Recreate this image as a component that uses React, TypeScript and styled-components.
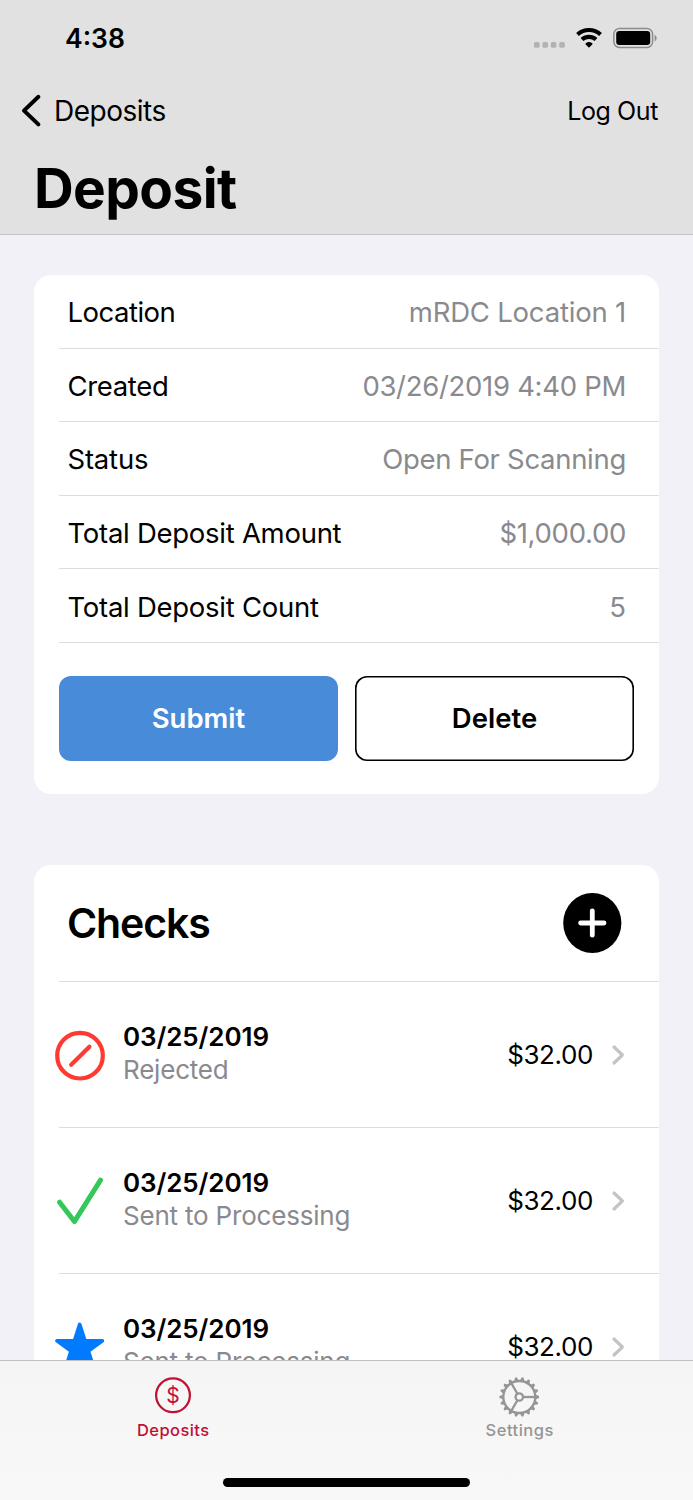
import React from 'react';
import styled, { createGlobalStyle } from 'styled-components';

const GlobalStyle = createGlobalStyle`
  * { box-sizing: border-box; }
  body { margin: 0; background: #f2f1f7; }
  button { font: inherit; color: inherit; background: none; border: 0; padding: 0; margin: 0; }
  svg { display: block; flex: none; overflow: visible; }
`;

const Screen = styled.div`
  width: 693px;
  height: 1500px;
  display: flex;
  flex-direction: column;
  overflow: hidden;
  background: #f2f1f7;
  color: #000;
  font-family: Inter, 'Liberation Sans', sans-serif;
  white-space: nowrap;
`;

const Label = styled.span<{ $size: number; $spacing?: number; $weight?: number; $color?: string }>`
  font-size: ${p => p.$size}px;
  font-weight: ${p => p.$weight ?? 400};
  letter-spacing: ${p => p.$spacing ?? 0}px;
  color: ${p => p.$color ?? 'inherit'};
  line-height: 1.2;
`;

const Header = styled.header`
  flex: none;
  height: 235px;
  background: #e1e1e1;
  border-bottom: 1px solid #c3c3c5;
`;

const StatusBar = styled.div`
  height: 76px;
  display: flex;
  align-items: center;
  justify-content: space-between;
  padding: 0 36px 0 65px;
`;

const Clock = styled(Label)`
  padding-top: 2px;
`;

const StatusIcons = styled.div`
  display: flex;
  align-items: center;
  gap: 11px;
`;

const NavBar = styled.nav`
  height: 70px;
  display: flex;
  align-items: center;
  justify-content: space-between;
  padding: 0 35px 0 21px;
`;

const BackButton = styled.button`
  display: flex;
  align-items: center;
  gap: 13px;
`;

const BackLabel = styled(Label)`
  padding-top: 2px;
`;

const Title = styled.h1`
  margin: 8px 0 0 34px;
  font-size: 55px;
  line-height: 68px;
  font-weight: 700;
  letter-spacing: -0.6px;
`;

const Content = styled.main`
  flex: 1;
  min-height: 0;
  overflow: hidden;
  padding: 40px 34px 0;
  display: flex;
  flex-direction: column;
  gap: 71px;
`;

const Card = styled.section`
  flex: none;
  background: #fff;
  border-radius: 17px;
  padding-left: 25px;
`;

const DetailRow = styled.div`
  height: 73.6px;
  display: flex;
  align-items: center;
  justify-content: space-between;
  padding: 3px 33px 0 8.5px;
  border-bottom: 1px solid #dcdcde;
`;

const Actions = styled.div`
  display: grid;
  grid-template-columns: 1fr 1fr;
  gap: 17px;
  padding: 33px 25px 33px 0;
`;

const ActionButton = styled.button<{ $primary?: boolean }>`
  height: 85px;
  padding-top: 1px;
  border-radius: 12px;
  background: ${p => (p.$primary ? '#488bd8' : '#fff')};
  color: ${p => (p.$primary ? '#fff' : '#000')};
  box-shadow: ${p => (p.$primary ? 'none' : 'inset 0 0 0 1.6px #000')};
`;

const ChecksHead = styled.div`
  height: 117px;
  display: flex;
  align-items: center;
  justify-content: space-between;
  padding: 0 37px 0 8px;
  border-bottom: 1px solid #dcdcde;
`;

const ChecksTitle = styled(Label)`
  padding-top: 2px;
`;

const CheckRow = styled.div`
  height: 146px;
  display: flex;
  align-items: center;
  padding-right: 34px;
  border-bottom: 1px solid #dcdcde;
`;

const CheckIcon = styled.div`
  width: 50px;
  margin: 3px 18px 0 -4px;
`;

const CheckText = styled.div`
  flex: 1;
  display: flex;
  flex-direction: column;
  gap: 2px;
  padding-bottom: 2px;
`;

const Amount = styled.div`
  display: flex;
  align-items: center;
  gap: 19px;
  padding-top: 1px;
`;

const TabBar = styled.footer`
  flex: none;
  height: 140px;
  background: linear-gradient(#f5f5f5, #f8f8f8);
  border-top: 1px solid #c0c0c2;
  display: flex;
  flex-direction: column;
  align-items: center;
`;

const Tabs = styled.div`
  width: 100%;
  height: 117px;
  display: grid;
  grid-template-columns: 1fr 1fr;
`;

const Tab = styled.button<{ $active?: boolean }>`
  display: flex;
  flex-direction: column;
  align-items: center;
  justify-content: flex-start;
  padding-top: 14px;
  gap: 8px;
  color: ${p => (p.$active ? '#c20f33' : '#959595')};
`;

const HomeIndicator = styled.div`
  width: 247px;
  height: 9px;
  border-radius: 5px;
  background: #000;
`;

const SignalIcon = () => (
  <svg width="31" height="20" viewBox="0 0 31 20" fill="#b2b2b2">
    {[0, 8.4, 16.8, 25.2].map(x => (
      <rect key={x} x={x} y="14" width="5.6" height="5.8" rx="1.6" />
    ))}
  </svg>
);

const WifiIcon = () => (
  <svg width="26" height="20" viewBox="0 0 26 20" fill="none" stroke="#000" strokeWidth="4.1">
    <path d="M1.5 6.5A16.9 16.9 0 0 1 24.5 6.5" />
    <path d="M6 11.6A10.3 10.3 0 0 1 20 11.6" />
    <path d="M13 18.8L10.2 15.9A4.6 4.6 0 0 1 15.8 15.9Z" fill="#000" strokeWidth="1.4" strokeLinejoin="round" />
  </svg>
);

const BatteryIcon = () => (
  <svg width="44" height="20" viewBox="0 0 44 20">
    <rect x="0.8" y="0.6" width="38.8" height="18.8" rx="5.6" fill="none" stroke="#8c8c8c" strokeWidth="1.5" />
    <rect x="3.2" y="3" width="34" height="14" rx="3.2" />
    <path d="M41.6 7v6.4c2.7-1.2 2.7-5.2 0-6.4Z" fill="#8c8c8c" />
  </svg>
);

const BackIcon = () => (
  <svg width="20" height="32" viewBox="0 0 20 32" fill="none" stroke="#000" strokeWidth="4" strokeLinecap="round" strokeLinejoin="round">
    <path d="M17.4 1.8L3 15.6L17.4 29.4" />
  </svg>
);

const PlusIcon = () => (
  <svg width="59" height="60" viewBox="0 0 59 60">
    <ellipse cx="29.3" cy="30" rx="29.1" ry="30" />
    <path d="M29.3 17.8v24.4M17.6 30h23.4" stroke="#fff" strokeWidth="4.8" strokeLinecap="round" />
  </svg>
);

const RejectedIcon = () => (
  <svg width="50" height="50" viewBox="0 0 50 50" fill="none" stroke="#ff3a30" strokeWidth="4.2" strokeLinecap="round">
    <circle cx="25" cy="24.7" r="22.8" />
    <path d="M16.2 33.7L34.4 15.7" />
  </svg>
);

const SentIcon = () => (
  <svg width="50" height="50" viewBox="0 0 50 50" fill="none" stroke="#34c759" strokeWidth="5" strokeLinecap="round" strokeLinejoin="round">
    <path d="M4.6 25.2L19.4 44.6L45.5 3.2" />
  </svg>
);

const StarIcon = () => (
  <svg width="50" height="50" viewBox="0 0 50 50" fill="#007aff" stroke="#007aff" strokeWidth="3.6" strokeLinejoin="round">
    <path d="M24.7 1.4L30 17.9H47.4L33.4 28.1L38.8 45L24.7 34.6L10.6 45L16 28.1L2 17.9H19.4Z" />
  </svg>
);

const Chevron = () => (
  <svg width="13" height="20" viewBox="0 0 13 20" fill="none" stroke="#c4c4c7" strokeWidth="3.2" strokeLinecap="round" strokeLinejoin="round">
    <path d="M2 2L10.4 10L2 18" />
  </svg>
);

const DollarIcon = () => (
  <svg width="38" height="38" viewBox="0 0 38 38">
    <circle cx="19" cy="20.3" r="16.9" fill="none" stroke="currentColor" strokeWidth="2.2" />
    <text x="19" y="28" textAnchor="middle" fontSize="21" fill="currentColor">$</text>
  </svg>
);

const TEETH = Array.from({ length: 18 }, (_, i) => i * 20);

const GearIcon = () => (
  <svg width="40" height="38" viewBox="0 0 40 38" fill="none" stroke="currentColor" strokeWidth="2.3">
    <g transform="translate(19.3 22)">
      <circle r="16" />
      <circle r="3.7" />
      {TEETH.map(a => (
        <path key={a} d="M16.6 -2.2L19.8 -0.9V0.9L16.6 2.2Z" fill="currentColor" stroke="none" transform={`rotate(${a})`} />
      ))}
      {[0, 120, 240].map(a => (
        <path key={a} d="M3.8 0H16" transform={`rotate(${a})`} />
      ))}
    </g>
  </svg>
);

const details = [
  { label: 'Location', value: 'mRDC Location 1', labelSpacing: -0.5, valueSpacing: -0.2 },
  { label: 'Created', value: '03/26/2019 4:40 PM', labelSpacing: -0.35, valueSpacing: -0.3 },
  { label: 'Status', value: 'Open For Scanning', labelSpacing: -0.2, valueSpacing: -0.3 },
  { label: 'Total Deposit Amount', value: '$1,000.00', labelSpacing: -0.27, valueSpacing: -0.3 },
  { label: 'Total Deposit Count', value: '5', labelSpacing: -0.27, valueSpacing: 0 },
];

const checks = [
  { icon: <RejectedIcon />, status: 'Rejected' },
  { icon: <SentIcon />, status: 'Sent to Processing' },
  { icon: <StarIcon />, status: 'Sent to Processing' },
];

export default function App() {
  return (
    <Screen>
      <GlobalStyle />
      <Header>
        <StatusBar>
          <Clock $size={26.5} $weight={600}>4:38</Clock>
          <StatusIcons>
            <SignalIcon />
            <WifiIcon />
            <BatteryIcon />
          </StatusIcons>
        </StatusBar>
        <NavBar>
          <BackButton>
            <BackIcon />
            <BackLabel $size={28} $spacing={-0.5}>Deposits</BackLabel>
          </BackButton>
          <Label $size={25} $spacing={-0.4}>Log Out</Label>
        </NavBar>
        <Title>Deposit</Title>
      </Header>
      <Content>
        <Card>
          {details.map(d => (
            <DetailRow key={d.label}>
              <Label $size={27.5} $spacing={d.labelSpacing}>{d.label}</Label>
              <Label $size={27.5} $spacing={d.valueSpacing} $color="#8a8a8e">{d.value}</Label>
            </DetailRow>
          ))}
          <Actions>
            <ActionButton $primary>
              <Label $size={27.5} $weight={600} $spacing={0}>Submit</Label>
            </ActionButton>
            <ActionButton>
              <Label $size={27.5} $weight={600} $spacing={0}>Delete</Label>
            </ActionButton>
          </Actions>
        </Card>
        <Card>
          <ChecksHead>
            <ChecksTitle $size={41} $weight={600} $spacing={-1.1}>Checks</ChecksTitle>
            <PlusIcon />
          </ChecksHead>
          {checks.map((c, i) => (
            <CheckRow key={i}>
              <CheckIcon>{c.icon}</CheckIcon>
              <CheckText>
                <Label $size={26} $weight={600} $spacing={-0.1}>03/25/2019</Label>
                <Label $size={26} $spacing={-0.2} $color="#8a8a8e">{c.status}</Label>
              </CheckText>
              <Amount>
                <Label $size={26} $spacing={-0.4}>$32.00</Label>
                <Chevron />
              </Amount>
            </CheckRow>
          ))}
        </Card>
      </Content>
      <TabBar>
        <Tabs>
          <Tab $active>
            <DollarIcon />
            <Label $size={16.5} $weight={500} $spacing={0.4}>Deposits</Label>
          </Tab>
          <Tab>
            <GearIcon />
            <Label $size={16.5} $weight={500} $spacing={0.5}>Settings</Label>
          </Tab>
        </Tabs>
        <HomeIndicator />
      </TabBar>
    </Screen>
  );
}
